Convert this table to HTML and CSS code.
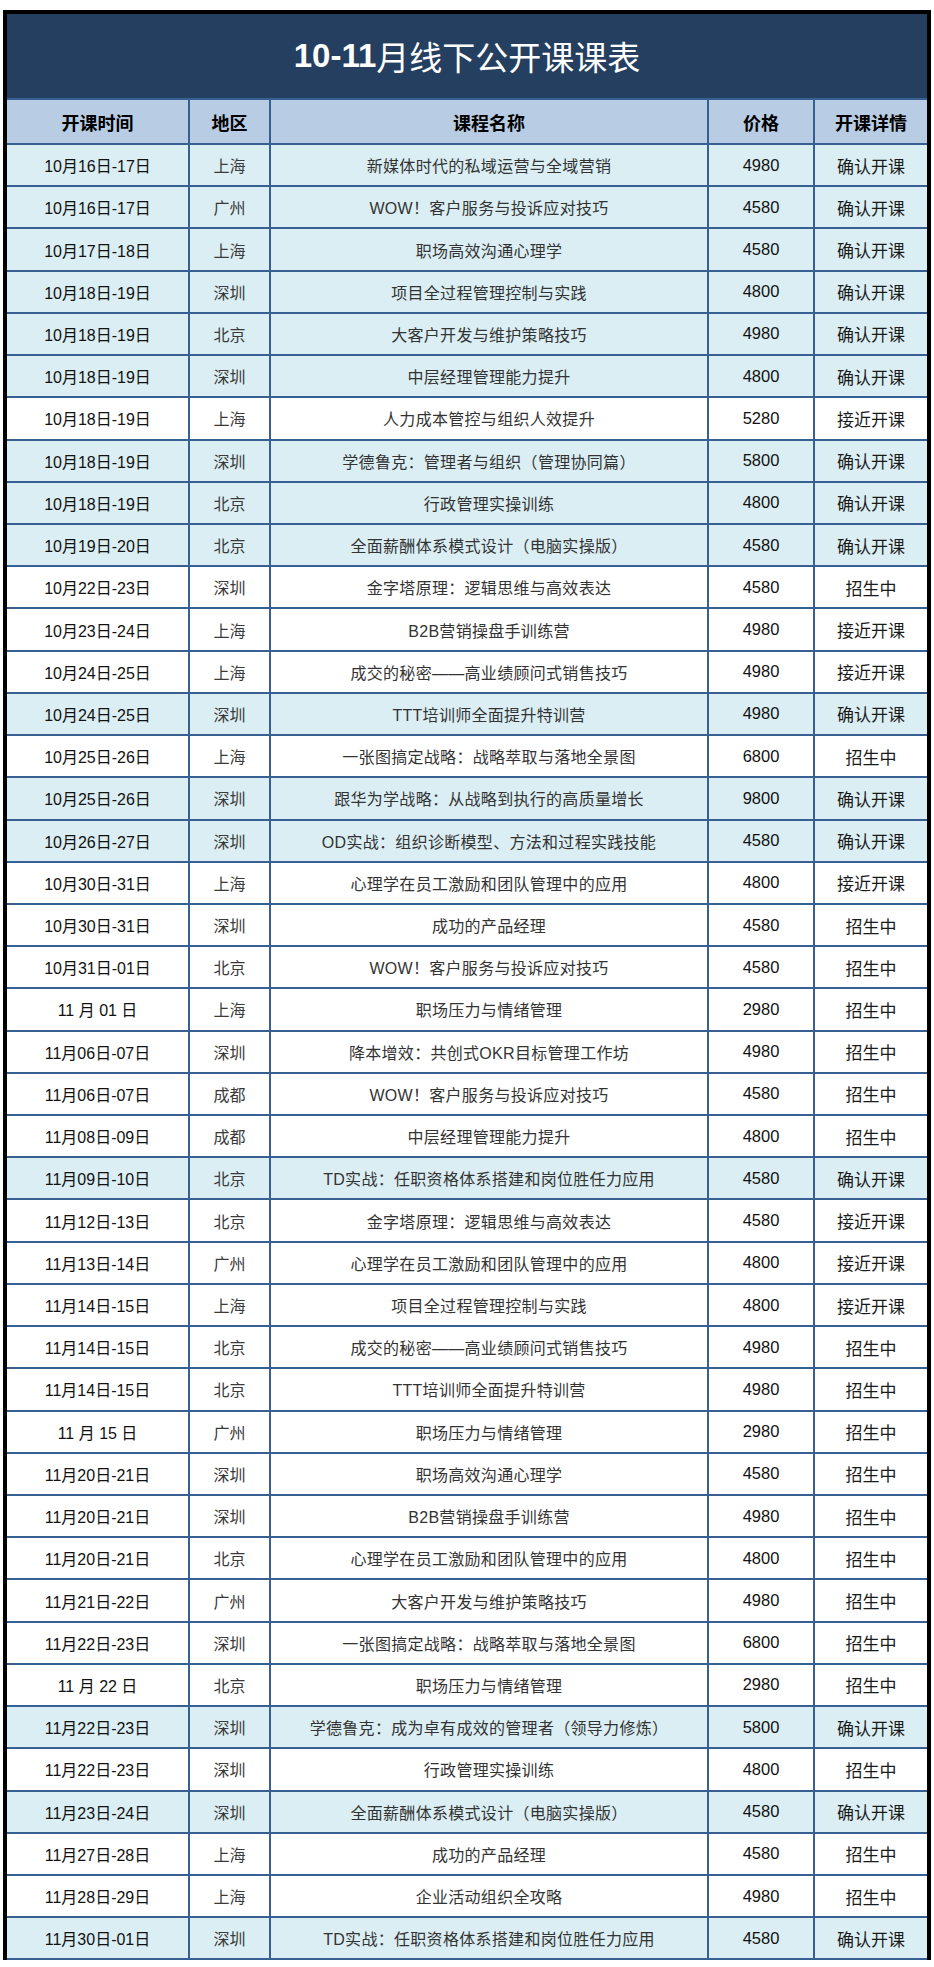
FILE: index.html
```html
<!DOCTYPE html>
<html lang="zh-CN">
<head>
<meta charset="utf-8">
<title>10-11月线下公开课课表</title>
<link rel="stylesheet" href="styles.css">
</head>
<body>
<div class="sheet">
  <div class="title"><span class="t-num">10-11</span><span class="t-cjk">月线下公开课课表</span></div>
  <div class="row head">
    <div class="cell">开课时间</div><div class="cell">地区</div><div class="cell">课程名称</div><div class="cell">价格</div><div class="cell">开课详情</div>
  </div>
  <div class="row blue"><div class="cell date">10月16日-17日</div><div class="cell city">上海</div><div class="cell course">新媒体时代的私域运营与全域营销</div><div class="cell price">4980</div><div class="cell status">确认开课</div></div>
  <div class="row blue"><div class="cell date">10月16日-17日</div><div class="cell city">广州</div><div class="cell course">WOW！客户服务与投诉应对技巧</div><div class="cell price">4580</div><div class="cell status">确认开课</div></div>
  <div class="row blue"><div class="cell date">10月17日-18日</div><div class="cell city">上海</div><div class="cell course">职场高效沟通心理学</div><div class="cell price">4580</div><div class="cell status">确认开课</div></div>
  <div class="row blue"><div class="cell date">10月18日-19日</div><div class="cell city">深圳</div><div class="cell course">项目全过程管理控制与实践</div><div class="cell price">4800</div><div class="cell status">确认开课</div></div>
  <div class="row blue"><div class="cell date">10月18日-19日</div><div class="cell city">北京</div><div class="cell course">大客户开发与维护策略技巧</div><div class="cell price">4980</div><div class="cell status">确认开课</div></div>
  <div class="row blue"><div class="cell date">10月18日-19日</div><div class="cell city">深圳</div><div class="cell course">中层经理管理能力提升</div><div class="cell price">4800</div><div class="cell status">确认开课</div></div>
  <div class="row"><div class="cell date">10月18日-19日</div><div class="cell city">上海</div><div class="cell course">人力成本管控与组织人效提升</div><div class="cell price">5280</div><div class="cell status">接近开课</div></div>
  <div class="row blue"><div class="cell date">10月18日-19日</div><div class="cell city">深圳</div><div class="cell course">学德鲁克：管理者与组织（管理协同篇）</div><div class="cell price">5800</div><div class="cell status">确认开课</div></div>
  <div class="row blue"><div class="cell date">10月18日-19日</div><div class="cell city">北京</div><div class="cell course">行政管理实操训练</div><div class="cell price">4800</div><div class="cell status">确认开课</div></div>
  <div class="row blue"><div class="cell date">10月19日-20日</div><div class="cell city">北京</div><div class="cell course">全面薪酬体系模式设计（电脑实操版）</div><div class="cell price">4580</div><div class="cell status">确认开课</div></div>
  <div class="row"><div class="cell date">10月22日-23日</div><div class="cell city">深圳</div><div class="cell course">金字塔原理：逻辑思维与高效表达</div><div class="cell price">4580</div><div class="cell status">招生中</div></div>
  <div class="row"><div class="cell date">10月23日-24日</div><div class="cell city">上海</div><div class="cell course">B2B营销操盘手训练营</div><div class="cell price">4980</div><div class="cell status">接近开课</div></div>
  <div class="row"><div class="cell date">10月24日-25日</div><div class="cell city">上海</div><div class="cell course">成交的秘密——高业绩顾问式销售技巧</div><div class="cell price">4980</div><div class="cell status">接近开课</div></div>
  <div class="row blue"><div class="cell date">10月24日-25日</div><div class="cell city">深圳</div><div class="cell course">TTT培训师全面提升特训营</div><div class="cell price">4980</div><div class="cell status">确认开课</div></div>
  <div class="row"><div class="cell date">10月25日-26日</div><div class="cell city">上海</div><div class="cell course">一张图搞定战略：战略萃取与落地全景图</div><div class="cell price">6800</div><div class="cell status">招生中</div></div>
  <div class="row blue"><div class="cell date">10月25日-26日</div><div class="cell city">深圳</div><div class="cell course">跟华为学战略：从战略到执行的高质量增长</div><div class="cell price">9800</div><div class="cell status">确认开课</div></div>
  <div class="row blue"><div class="cell date">10月26日-27日</div><div class="cell city">深圳</div><div class="cell course">OD实战：组织诊断模型、方法和过程实践技能</div><div class="cell price">4580</div><div class="cell status">确认开课</div></div>
  <div class="row"><div class="cell date">10月30日-31日</div><div class="cell city">上海</div><div class="cell course">心理学在员工激励和团队管理中的应用</div><div class="cell price">4800</div><div class="cell status">接近开课</div></div>
  <div class="row"><div class="cell date">10月30日-31日</div><div class="cell city">深圳</div><div class="cell course">成功的产品经理</div><div class="cell price">4580</div><div class="cell status">招生中</div></div>
  <div class="row"><div class="cell date">10月31日-01日</div><div class="cell city">北京</div><div class="cell course">WOW！客户服务与投诉应对技巧</div><div class="cell price">4580</div><div class="cell status">招生中</div></div>
  <div class="row"><div class="cell date">11 月 01 日</div><div class="cell city">上海</div><div class="cell course">职场压力与情绪管理</div><div class="cell price">2980</div><div class="cell status">招生中</div></div>
  <div class="row"><div class="cell date">11月06日-07日</div><div class="cell city">深圳</div><div class="cell course">降本增效：共创式OKR目标管理工作坊</div><div class="cell price">4980</div><div class="cell status">招生中</div></div>
  <div class="row"><div class="cell date">11月06日-07日</div><div class="cell city">成都</div><div class="cell course">WOW！客户服务与投诉应对技巧</div><div class="cell price">4580</div><div class="cell status">招生中</div></div>
  <div class="row"><div class="cell date">11月08日-09日</div><div class="cell city">成都</div><div class="cell course">中层经理管理能力提升</div><div class="cell price">4800</div><div class="cell status">招生中</div></div>
  <div class="row blue"><div class="cell date">11月09日-10日</div><div class="cell city">北京</div><div class="cell course">TD实战：任职资格体系搭建和岗位胜任力应用</div><div class="cell price">4580</div><div class="cell status">确认开课</div></div>
  <div class="row"><div class="cell date">11月12日-13日</div><div class="cell city">北京</div><div class="cell course">金字塔原理：逻辑思维与高效表达</div><div class="cell price">4580</div><div class="cell status">接近开课</div></div>
  <div class="row"><div class="cell date">11月13日-14日</div><div class="cell city">广州</div><div class="cell course">心理学在员工激励和团队管理中的应用</div><div class="cell price">4800</div><div class="cell status">接近开课</div></div>
  <div class="row"><div class="cell date">11月14日-15日</div><div class="cell city">上海</div><div class="cell course">项目全过程管理控制与实践</div><div class="cell price">4800</div><div class="cell status">接近开课</div></div>
  <div class="row"><div class="cell date">11月14日-15日</div><div class="cell city">北京</div><div class="cell course">成交的秘密——高业绩顾问式销售技巧</div><div class="cell price">4980</div><div class="cell status">招生中</div></div>
  <div class="row"><div class="cell date">11月14日-15日</div><div class="cell city">北京</div><div class="cell course">TTT培训师全面提升特训营</div><div class="cell price">4980</div><div class="cell status">招生中</div></div>
  <div class="row"><div class="cell date">11 月 15 日</div><div class="cell city">广州</div><div class="cell course">职场压力与情绪管理</div><div class="cell price">2980</div><div class="cell status">招生中</div></div>
  <div class="row"><div class="cell date">11月20日-21日</div><div class="cell city">深圳</div><div class="cell course">职场高效沟通心理学</div><div class="cell price">4580</div><div class="cell status">招生中</div></div>
  <div class="row"><div class="cell date">11月20日-21日</div><div class="cell city">深圳</div><div class="cell course">B2B营销操盘手训练营</div><div class="cell price">4980</div><div class="cell status">招生中</div></div>
  <div class="row"><div class="cell date">11月20日-21日</div><div class="cell city">北京</div><div class="cell course">心理学在员工激励和团队管理中的应用</div><div class="cell price">4800</div><div class="cell status">招生中</div></div>
  <div class="row"><div class="cell date">11月21日-22日</div><div class="cell city">广州</div><div class="cell course">大客户开发与维护策略技巧</div><div class="cell price">4980</div><div class="cell status">招生中</div></div>
  <div class="row"><div class="cell date">11月22日-23日</div><div class="cell city">深圳</div><div class="cell course">一张图搞定战略：战略萃取与落地全景图</div><div class="cell price">6800</div><div class="cell status">招生中</div></div>
  <div class="row"><div class="cell date">11 月 22 日</div><div class="cell city">北京</div><div class="cell course">职场压力与情绪管理</div><div class="cell price">2980</div><div class="cell status">招生中</div></div>
  <div class="row blue"><div class="cell date">11月22日-23日</div><div class="cell city">深圳</div><div class="cell course">学德鲁克：成为卓有成效的管理者（领导力修炼）</div><div class="cell price">5800</div><div class="cell status">确认开课</div></div>
  <div class="row"><div class="cell date">11月22日-23日</div><div class="cell city">深圳</div><div class="cell course">行政管理实操训练</div><div class="cell price">4800</div><div class="cell status">招生中</div></div>
  <div class="row blue"><div class="cell date">11月23日-24日</div><div class="cell city">深圳</div><div class="cell course">全面薪酬体系模式设计（电脑实操版）</div><div class="cell price">4580</div><div class="cell status">确认开课</div></div>
  <div class="row"><div class="cell date">11月27日-28日</div><div class="cell city">上海</div><div class="cell course">成功的产品经理</div><div class="cell price">4580</div><div class="cell status">招生中</div></div>
  <div class="row"><div class="cell date">11月28日-29日</div><div class="cell city">上海</div><div class="cell course">企业活动组织全攻略</div><div class="cell price">4980</div><div class="cell status">招生中</div></div>
  <div class="row blue"><div class="cell date">11月30日-01日</div><div class="cell city">深圳</div><div class="cell course">TD实战：任职资格体系搭建和岗位胜任力应用</div><div class="cell price">4580</div><div class="cell status">确认开课</div></div>
</div>
</body>
</html>
```

FILE: styles.css
```css
* {
  box-sizing: border-box;
}

body {
  margin: 0;
  background: #ffffff;
  font-family: "Liberation Sans", "Noto Sans CJK SC", sans-serif;
}

.sheet {
  margin: 10px 0 0 3px;
  width: 928px;
  border: 4px solid #000000;
  border-bottom: 0;
}

.title {
  height: 86px;
  background: #243f60;
  border-bottom: 2px solid #376092;
  display: flex;
  align-items: center;
  justify-content: center;
  color: #ffffff;
  font-size: 33px;
}

.t-num {
  font-weight: bold;
}

.t-cjk {
  font-weight: normal;
}

.row {
  display: grid;
  grid-template-columns: 183px 81px 438px 106px 112px;
  height: 42.23px;
  border-bottom: 2px solid #376092;
  font-size: 16px;
  background: #ffffff;
}

.row.blue {
  background: #daeef3;
}

.row.head {
  height: 45px;
  background: #b8cce4;
  font-size: 18px;
  font-weight: bold;
  color: #000000;
}

.cell {
  display: flex;
  align-items: center;
  justify-content: center;
  border-right: 2px solid #376092;
  white-space: nowrap;
}

.cell:last-child {
  border-right: 0;
}

.date {
  color: #111111;
}

.city {
  color: #3a3a3a;
}

.course {
  color: #333333;
  letter-spacing: 0.3px;
}

.price {
  color: #111111;
  font-size: 16.5px;
}

.row.head .cell {
  font-size: 18px;
}

.status {
  color: #1a1a1a;
  font-size: 17px;
}
```
